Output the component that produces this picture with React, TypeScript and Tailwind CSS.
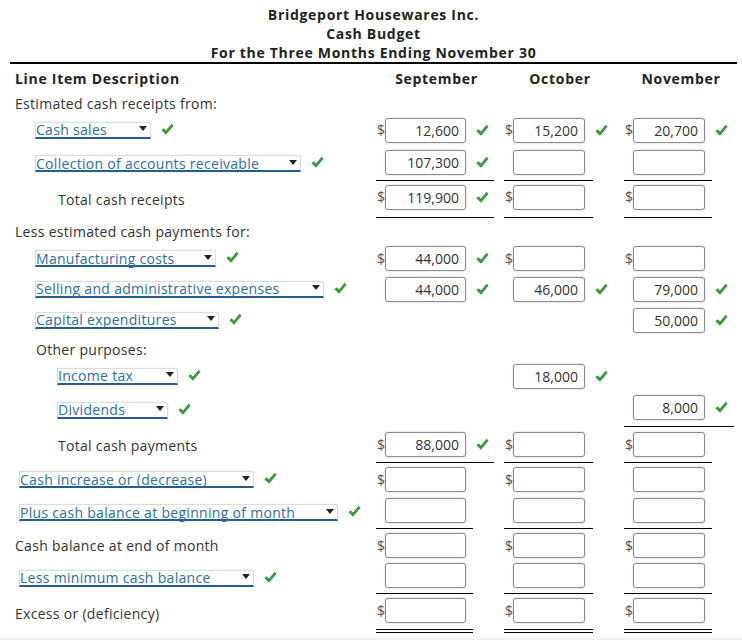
import React from 'react';

const Check = () => (
  <svg width="13" height="13" viewBox="0 0 13 13" className="shrink-0">
    <path d="M0.4 7.2 L2.6 5.2 L5 7.6 L10.6 0.8 L12.6 2.8 L5 11.8 Z" fill="#3a9b3a" />
  </svg>
);

const Dropdown = ({ text, w }: { text: string; w: string }) => (
  <div className="flex items-center">
    <div
      className={`${w} h-[17px] flex items-center bg-white border border-[#dcdcdc] border-b-2 border-b-[#235e91] rounded-tr-[3px] shadow-[0_0_2px_rgba(0,0,0,0.12)]`}
    >
      <span className="text-[#2c6ea8] leading-[15px] whitespace-nowrap">{text}</span>
      <span className="ml-auto mr-[3px] -mt-[2px] w-0 h-0 border-l-[4px] border-r-[4px] border-t-[5px] border-l-transparent border-r-transparent border-t-[#222]" />
    </div>
    <div className="ml-[10px] -mt-[2px]">
      <Check />
    </div>
  </div>
);

type CellData = { d?: boolean; v?: string; ok?: boolean } | null;

const Cell = ({ c, wide, line, pad }: { c: CellData; wide: boolean; line: string; pad: string }) => (
  <div className="h-full pl-[5px]">
    <div className={`h-full flex items-center ${line} ${pad}`}>
      {c && (
        <>
          <span className="w-[9px] pl-[1px] text-[#555] leading-none tracking-normal">{c.d ? '$' : ''}</span>
          <div
            className={`${wide ? 'w-[81px]' : 'w-[72px]'} h-[25px] shrink-0 bg-white border border-[#8c8c8c] rounded-[3px] shadow-[0_0_2px_rgba(0,0,0,0.25)] flex items-center justify-end pr-[6px] text-[#333] tracking-normal`}
          >
            {c.v}
          </div>
          {c.ok && (
            <div className="ml-[10px]">
              <Check />
            </div>
          )}
        </>
      )}
    </div>
  </div>
);

type Row = {
  h: string;
  label: React.ReactNode;
  lp: string;
  cells?: [CellData, CellData, CellData];
  lines?: [string, string, string];
  pad?: string;
};

const S = 'w-[118px] border-b border-black';
const O = 'w-[89px] border-b border-black';
const N = 'w-[88px] border-b border-black';
const S2 = 'w-[97px] border-b border-black';

const rows: Row[] = [
  {
    h: 'h-[32px]',
    lp: 'pl-[35px]',
    label: <Dropdown text="Cash sales" w="w-[116px]" />,
    cells: [
      { d: true, v: '12,600', ok: true },
      { d: true, v: '15,200', ok: true },
      { d: true, v: '20,700', ok: true },
    ],
  },
  {
    h: 'h-[35px]',
    lp: 'pl-[35px]',
    label: <Dropdown text="Collection of accounts receivable" w="w-[266px]" />,
    cells: [{ v: '107,300', ok: true }, {}, {}],
    lines: [S, O, N],
    pad: 'pb-[2px]',
  },
  {
    h: 'h-[37px]',
    lp: 'pl-[58px]',
    label: <span>Total cash receipts</span>,
    cells: [{ d: true, v: '119,900', ok: true }, { d: true }, { d: true }],
    lines: [S, O, N],
    pad: 'pb-[4px]',
  },
  { h: 'h-[26px]', lp: 'pl-[15px]', label: <span>Less estimated cash payments for:</span> },
  {
    h: 'h-[29px]',
    lp: 'pl-[35px]',
    label: <Dropdown text="Manufacturing costs" w="w-[181px]" />,
    cells: [{ d: true, v: '44,000', ok: true }, { d: true }, { d: true }],
  },
  {
    h: 'h-[32px]',
    lp: 'pl-[35px]',
    label: <Dropdown text="Selling and administrative expenses" w="w-[289px]" />,
    cells: [
      { v: '44,000', ok: true },
      { v: '46,000', ok: true },
      { v: '79,000', ok: true },
    ],
  },
  {
    h: 'h-[30px]',
    lp: 'pl-[35px]',
    label: <Dropdown text="Capital expenditures" w="w-[184px]" />,
    cells: [null, null, { v: '50,000', ok: true }],
  },
  { h: 'h-[28px]', lp: 'pl-[36px]', label: <span>Other purposes:</span> },
  {
    h: 'h-[26px]',
    lp: 'pl-[57px]',
    label: <Dropdown text="Income tax" w="w-[121px]" />,
    cells: [null, { v: '18,000', ok: true }, null],
  },
  {
    h: 'h-[38px]',
    lp: 'pl-[57px] pt-[4px]',
    label: <Dropdown text="Dividends" w="w-[111px]" />,
    cells: [null, null, { v: '8,000', ok: true }],
    lines: ['', '', 'w-[110px] border-b border-black'],
  },
  {
    h: 'h-[36px]',
    lp: 'pl-[58px]',
    label: <span>Total cash payments</span>,
    cells: [{ d: true, v: '88,000', ok: true }, { d: true }, { d: true }],
    lines: [S, O, N],
  },
  {
    h: 'h-[33px]',
    lp: 'pl-[19px]',
    label: <Dropdown text="Cash increase or (decrease)" w="w-[235px]" />,
    cells: [{ d: true }, { d: true }, {}],
  },
  {
    h: 'h-[33px]',
    lp: 'pl-[19px]',
    label: <Dropdown text="Plus cash balance at beginning of month" w="w-[319px]" />,
    cells: [{}, {}, {}],
    lines: [S2, O, N],
    pad: 'pb-[3px]',
  },
  {
    h: 'h-[33px]',
    lp: 'pl-[15px]',
    label: <span>Cash balance at end of month</span>,
    cells: [{ d: true }, { d: true }, { d: true }],
  },
  {
    h: 'h-[32px]',
    lp: 'pl-[19px]',
    label: <Dropdown text="Less minimum cash balance" w="w-[235px]" />,
    cells: [{}, {}, {}],
    lines: [S2, O, N],
    pad: 'pb-[4px]',
  },
  {
    h: 'h-[39px]',
    lp: 'pl-[15px]',
    label: <span>Excess or (deficiency)</span>,
    cells: [{ d: true }, { d: true }, { d: true }],
    lines: [
      'w-[97px] border-b-4 border-double border-black',
      'w-[89px] border-b-4 border-double border-black',
      'w-[88px] border-b-4 border-double border-black',
    ],
    pad: 'pb-[2px]',
  },
];

export default function App() {
  return (
    <div className="w-[742px] h-[640px] overflow-hidden bg-white text-[14px] text-[#333] tracking-[0.3px] font-['Open_Sans',sans-serif]">
      <div className="pl-[10px] pr-[5px]">
        <div className="pt-[5px] text-center font-bold text-[#222] leading-[19px] tracking-[0.7px]">
          <div>Bridgeport Housewares Inc.</div>
          <div>Cash Budget</div>
          <div>For the Three Months Ending November 30</div>
        </div>
        <div className="h-[2px] bg-black" />
      </div>
      <div className="grid grid-cols-[371px_128px_120px_123px] h-[28px] items-center font-bold text-[#222] tracking-[0.7px]">
        <div className="pl-[15px]">Line Item Description</div>
        <div className="text-center pl-[3px]">September</div>
        <div className="text-center pl-[2px]">October</div>
        <div className="text-center pl-[1px]">November</div>
      </div>
      <div className="h-[22px] flex items-center pl-[15px]">Estimated cash receipts from:</div>
      {rows.map((r, i) => (
        <div key={i} className={`grid grid-cols-[371px_128px_120px_123px] ${r.h}`}>
          <div className={`flex items-center ${r.lp}`}>{r.label}</div>
          {[0, 1, 2].map((j) => (
            <Cell
              key={j}
              c={r.cells ? r.cells[j] : null}
              wide={j === 0}
              line={r.lines ? r.lines[j] : ''}
              pad={r.pad ?? ''}
            />
          ))}
        </div>
      ))}
      <div className="mt-[5px] h-[10px] bg-[#f2f2f2]" />
    </div>
  );
}
